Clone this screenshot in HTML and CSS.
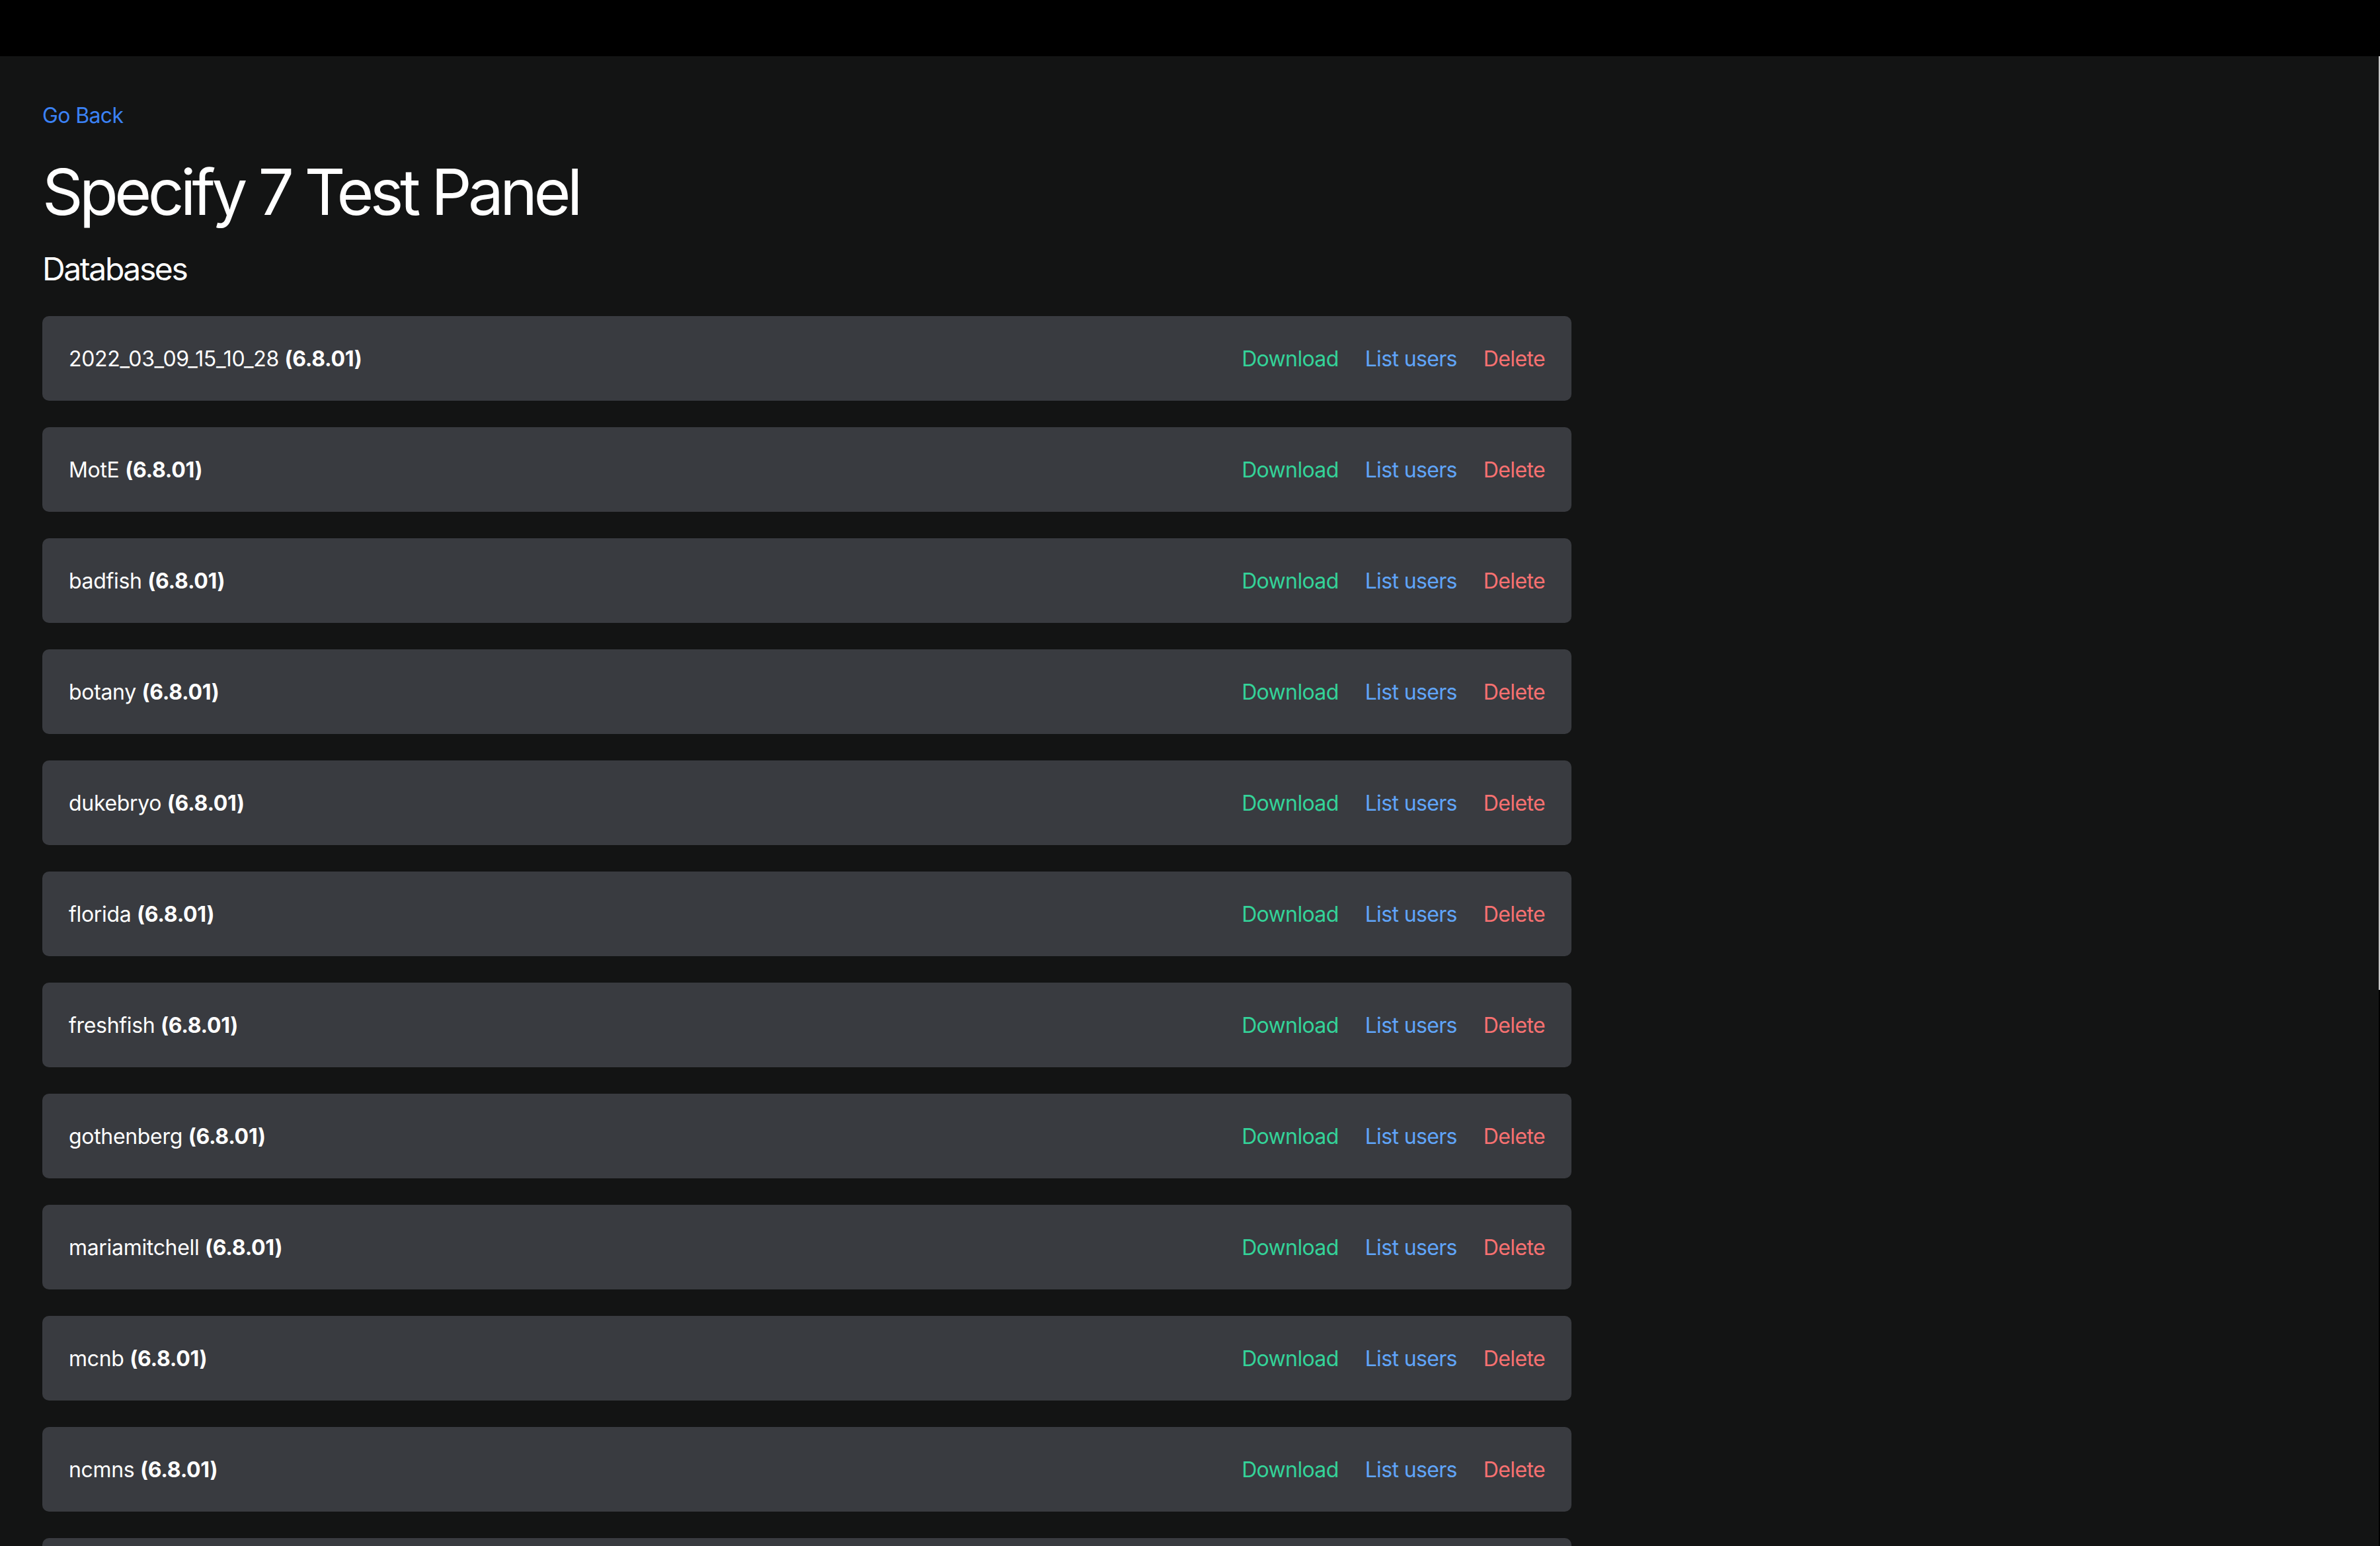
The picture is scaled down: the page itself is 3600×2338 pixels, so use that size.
FILE: index.html
```html
<!DOCTYPE html>
<html lang="en">
<head>
<meta charset="utf-8">
<title>Specify 7 Test Panel</title>
<link rel="stylesheet" href="styles.css">
</head>
<body>
<div class="topbar"></div>
<main class="page">
  <a class="back" href="#">Go Back</a>
  <h1 class="title">Specify 7 Test Panel</h1>
  <h2 class="subtitle">Databases</h2>
  <ul class="db-list">
    <li class="db"><span class="db-name">2022_03_09_15_10_28 <b>(6.8.01)</b></span><span class="actions"><a class="dl" href="#">Download</a><a class="lu" href="#">List users</a><a class="del" href="#">Delete</a></span></li>
    <li class="db"><span class="db-name">MotE <b>(6.8.01)</b></span><span class="actions"><a class="dl" href="#">Download</a><a class="lu" href="#">List users</a><a class="del" href="#">Delete</a></span></li>
    <li class="db"><span class="db-name">badfish <b>(6.8.01)</b></span><span class="actions"><a class="dl" href="#">Download</a><a class="lu" href="#">List users</a><a class="del" href="#">Delete</a></span></li>
    <li class="db"><span class="db-name">botany <b>(6.8.01)</b></span><span class="actions"><a class="dl" href="#">Download</a><a class="lu" href="#">List users</a><a class="del" href="#">Delete</a></span></li>
    <li class="db"><span class="db-name">dukebryo <b>(6.8.01)</b></span><span class="actions"><a class="dl" href="#">Download</a><a class="lu" href="#">List users</a><a class="del" href="#">Delete</a></span></li>
    <li class="db"><span class="db-name">florida <b>(6.8.01)</b></span><span class="actions"><a class="dl" href="#">Download</a><a class="lu" href="#">List users</a><a class="del" href="#">Delete</a></span></li>
    <li class="db"><span class="db-name">freshfish <b>(6.8.01)</b></span><span class="actions"><a class="dl" href="#">Download</a><a class="lu" href="#">List users</a><a class="del" href="#">Delete</a></span></li>
    <li class="db"><span class="db-name">gothenberg <b>(6.8.01)</b></span><span class="actions"><a class="dl" href="#">Download</a><a class="lu" href="#">List users</a><a class="del" href="#">Delete</a></span></li>
    <li class="db"><span class="db-name">mariamitchell <b>(6.8.01)</b></span><span class="actions"><a class="dl" href="#">Download</a><a class="lu" href="#">List users</a><a class="del" href="#">Delete</a></span></li>
    <li class="db"><span class="db-name">mcnb <b>(6.8.01)</b></span><span class="actions"><a class="dl" href="#">Download</a><a class="lu" href="#">List users</a><a class="del" href="#">Delete</a></span></li>
    <li class="db"><span class="db-name">ncmns <b>(6.8.01)</b></span><span class="actions"><a class="dl" href="#">Download</a><a class="lu" href="#">List users</a><a class="del" href="#">Delete</a></span></li>
    <li class="db"><span class="db-name">nmnh <b>(6.8.01)</b></span><span class="actions"><a class="dl" href="#">Download</a><a class="lu" href="#">List users</a><a class="del" href="#">Delete</a></span></li>
  </ul>
</main>
<div class="scrollbar"><div class="scroll-thumb"></div></div>
</body>
</html>
```
FILE: styles.css
```css
html, body {
  margin: 0;
  padding: 0;
  height: 2338px;
  overflow: hidden;
}
body {
  background: #131414;
  color: #ffffff;
  font-family: Inter, "Liberation Sans", sans-serif;
  font-size: 32px;
  line-height: 48px;
  letter-spacing: -0.02em;
}
.topbar {
  height: 85px;
  background: #000000;
}
.page {
  padding: 66px 64px 0 64px;
  display: flex;
  flex-direction: column;
  align-items: flex-start;
}
.back {
  color: #3b82f6;
  text-decoration: none;
  font-size: 32px;
  line-height: 48px;
}
.title {
  margin: 43px 0 0 0;
  font-size: 96px;
  line-height: 96px;
  font-weight: 400;
  letter-spacing: -0.058em;
}
.subtitle {
  margin: 37px 0 0 0;
  font-size: 48px;
  line-height: 64px;
  font-weight: 400;
  letter-spacing: -0.05em;
}
.db-list {
  list-style: none;
  margin: 39px 0 0 0;
  padding: 0;
  width: 2313px;
  display: flex;
  flex-direction: column;
  gap: 40px;
}
.db {
  background: #393b40;
  border-radius: 10px;
  padding: 40px;
  height: 48px;
  display: flex;
  justify-content: space-between;
  align-items: center;
}
.db-name {
  letter-spacing: -0.01em;
  padding-top: 2px;
}
.db-name b {
  font-weight: 700;
}
.actions {
  display: flex;
  gap: 40px;
  padding-top: 2px;
}
.actions a {
  text-decoration: none;
}
.dl { color: #34d399; }
.lu { color: #60a5fa; }
.del { color: #f87171; }
.scrollbar {
  position: fixed;
  top: 85px;
  right: 0;
  bottom: 0;
  width: 2px;
  background: #000000;
}
.scroll-thumb {
  height: 1412px;
  background: #c9c9c9;
}
```
